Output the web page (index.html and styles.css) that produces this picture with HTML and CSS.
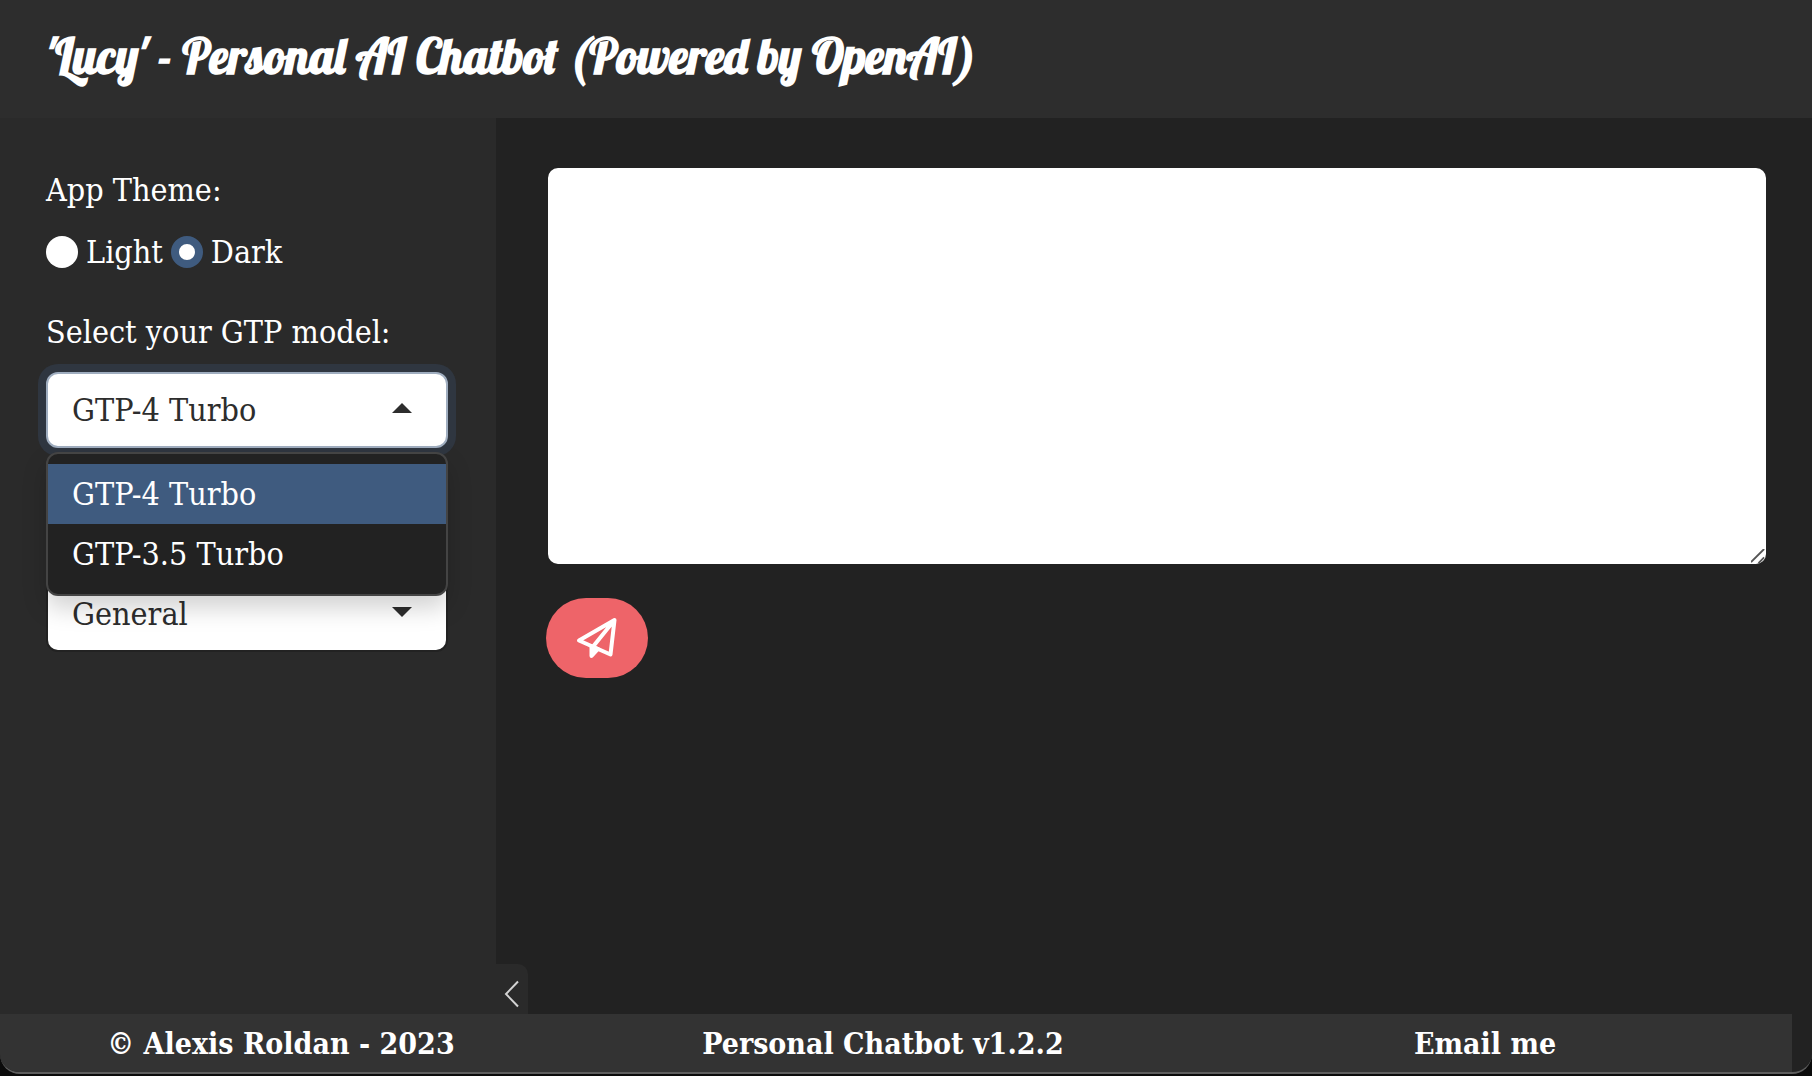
FILE: index.html
```html
<!DOCTYPE html>
<html lang="en">
<head>
<meta charset="utf-8">
<meta name="viewport" content="width=device-width, initial-scale=1">
<title>Lucy - Personal AI Chatbot</title>
<link rel="stylesheet" href="styles.css">
</head>
<body>
<div class="app">
  <header class="app-header">
    <h1 class="app-title">'Lucy' - Personal AI Chatbot (Powered by OpenAI)</h1>
  </header>

  <div class="layout">
    <aside class="sidebar">
      <fieldset class="field theme">
        <legend class="label">App Theme:</legend>
        <div class="radios">
          <input class="radio" type="radio" name="theme" id="light"><label for="light">Light</label>
          <input class="radio" type="radio" name="theme" id="dark" checked><label for="dark">Dark</label>
        </div>
      </fieldset>

      <div class="field">
        <label class="label" for="model">Select your GTP model:</label>
        <div class="picker">
          <select class="select select-open" id="model">
            <option>GTP-4 Turbo</option>
            <option>GTP-3.5 Turbo</option>
          </select>
          <svg class="caret" viewBox="0 0 20 10" aria-hidden="true"><path d="M0 10 10 0 20 10Z"/></svg>
          <ul class="menu" role="listbox" aria-label="Models">
            <li class="option option-active" role="option" aria-selected="true">GTP-4 Turbo</li>
            <li class="option" role="option" aria-selected="false">GTP-3.5 Turbo</li>
          </ul>
        </div>
      </div>

      <div class="field field-topic">
        <div class="picker">
          <select class="select" id="topic" aria-label="Topic">
            <option>General</option>
          </select>
          <svg class="caret" viewBox="0 0 20 10" aria-hidden="true"><path d="M0 0 10 10 20 0Z"/></svg>
        </div>
      </div>

      <button class="toggle" type="button" aria-label="Collapse sidebar">
        <svg class="toggle-icon" viewBox="0 0 16 28" aria-hidden="true"><path d="M14 1.500 2 14 14 26.500"/></svg>
      </button>
    </aside>

    <main class="chat">
      <textarea class="prompt" aria-label="Message"></textarea>
      <button class="send" type="button" aria-label="Send">
        <svg class="send-icon" viewBox="0 0 42 42" aria-hidden="true">
          <path d="M38.500 3 3 23.500 34.500 37.500 38.500 3 17.500 29"/>
          <path class="send-fold" d="M15.500 29.500V39L22 32Z"/>
        </svg>
      </button>
    </main>
  </div>

  <footer class="app-footer">
    <span>© Alexis Roldan - 2023</span>
    <span>Personal Chatbot v1.2.2</span>
    <a class="mail" href="mailto:">Email me</a>
  </footer>
</div>
</body>
</html>
```
FILE: styles.css
```css
* {
  box-sizing: border-box;
}

body {
  margin: 0;
  background: #0b0b0b;
  color: #fff;
  font-family: "Roboto Slab", "DejaVu Serif Condensed", "DejaVu Serif", serif;
  font-size: 32px;
  line-height: 48px;
}

.app {
  display: flex;
  flex-direction: column;
  min-height: calc(100vh - 2px);
  overflow: hidden;
  background: #222;
  border-bottom: 2px solid #5e5e5e;
  border-radius: 0 0 20px 20px;
}

.app-header {
  padding: 26px 46px 32px;
  background: #2d2d2d;
}

.app-title {
  margin: 0;
  font-family: Lobster, "Liberation Serif", serif;
  font-size: 48px;
  font-weight: 700;
  line-height: 60px;
}

.layout {
  display: grid;
  flex: 1;
  grid-template-columns: 496px 1fr;
}

.sidebar {
  position: relative;
  padding: 48px 48px 48px 46px;
  background: #2a2a2a;
}

.field {
  margin: 0 0 32px;
  padding: 0;
  border: 0;
}

.label {
  display: block;
  margin-bottom: 16px;
  padding: 0;
}

.theme .label {
  margin-bottom: 14px;
}

.radios {
  display: flex;
  align-items: center;
  gap: 8px;
}

.radio {
  appearance: none;
  width: 32px;
  height: 32px;
  margin: 0;
  background: #fff;
  border-radius: 50%;
}

.radio:checked {
  border: 8px solid #3f5b7f;
}

.picker {
  position: relative;
}

.select {
  display: block;
  appearance: none;
  width: 100%;
  height: 76px;
  padding: 0 72px 0 24px;
  background: #fff;
  border: 2px solid #222;
  border-radius: 12px;
  color: #2d2d2d;
  font: inherit;
}

.select-open {
  border-color: #9fadbf;
  box-shadow: 0 0 0 8px #2f3640;
}

.caret {
  position: absolute;
  top: 31px;
  right: 36px;
  width: 20px;
  height: 10px;
  fill: #2d2d2d;
  pointer-events: none;
}

.menu {
  position: absolute;
  z-index: 1;
  top: calc(100% + 4px);
  right: 0;
  left: 0;
  margin: 0;
  padding: 10px 0;
  background: #222;
  border: 2px solid #444;
  border-radius: 12px;
  box-shadow: 0 12px 24px rgb(0 0 0 / 18%);
  list-style: none;
}

.option {
  padding: 6px 24px;
}

.option-active {
  background: #3f5b7f;
}

.field-topic {
  padding-top: 96px;
}

.toggle {
  position: absolute;
  bottom: 0;
  left: 100%;
  display: grid;
  place-items: center;
  width: 32px;
  height: 50px;
  padding: 10px 0 0;
  background: #2a2a2a;
  border: 0;
  border-radius: 0 10px 0 0;
}

.toggle-icon {
  width: 16px;
  height: 28px;
  fill: none;
  stroke: #d3d3d3;
  stroke-width: 2;
}

.chat {
  padding: 48px 44px 48px 50px;
}

.prompt {
  display: block;
  width: 100%;
  height: 400px;
  padding: 12px 24px;
  background: #fff;
  border: 2px solid #222;
  border-radius: 12px;
  color: #2d2d2d;
  font: inherit;
  resize: vertical;
}

.prompt::-webkit-resizer {
  background: url("data:image/svg+xml,%3Csvg xmlns='http://www.w3.org/2000/svg' viewBox='0 0 16 16'%3E%3Cpath d='M0 14 14 0M8 15 14 9' stroke='%23555' stroke-width='2'/%3E%3C/svg%3E") center / 100% no-repeat;
}

.send {
  display: grid;
  place-items: center;
  width: 102px;
  height: 80px;
  margin: 32px 0 0;
  padding: 0;
  background: #ee6469;
  border: 0;
  border-radius: 40px;
}

.send-icon {
  width: 42px;
  height: 42px;
  fill: none;
  stroke: #fff;
  stroke-linecap: round;
  stroke-linejoin: round;
  stroke-width: 4;
}

.send-icon .send-fold {
  fill: #fff;
}

.app-footer {
  display: grid;
  grid-template-columns: 7fr 8fr 7fr;
  margin-right: 20px;
  padding: 6px 26px 4px 0;
  background: #333;
  font-size: 30px;
  font-weight: 700;
  text-align: center;
}

.mail {
  color: inherit;
  text-decoration: none;
}
```
